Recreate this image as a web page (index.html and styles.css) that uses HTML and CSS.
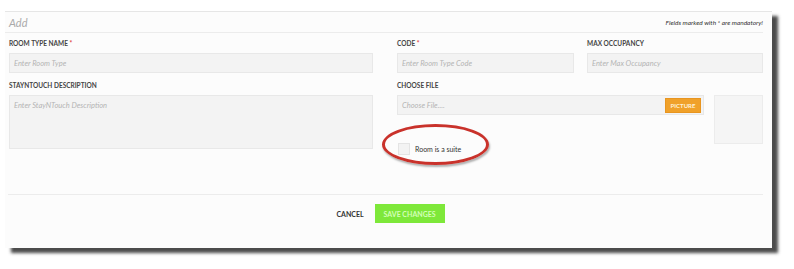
FILE: index.html
```html
<!DOCTYPE html>
<html lang="en">
<head>
    <meta charset="UTF-8">
    <meta name="viewport" content="width=device-width, initial-scale=1.0">
    <title>Add Room Type</title>
    <link rel="stylesheet" href="styles.css">
</head>
<body>
    <div class="panel">
        <div class="panel-head">
            <span class="title">Add</span>
            <span class="note">Fields marked with * are mandatory!</span>
        </div>
        <form class="room-form">
            <div class="row">
                <div class="field f-wide">
                    <label>ROOM TYPE NAME <span class="req">*</span></label>
                    <input type="text" placeholder="Enter Room Type">
                </div>
                <div class="field f-code">
                    <label>CODE <span class="req">*</span></label>
                    <input type="text" placeholder="Enter Room Type Code">
                </div>
                <div class="field f-max">
                    <label>MAX OCCUPANCY</label>
                    <input type="text" placeholder="Enter Max Occupancy">
                </div>
            </div>
            <div class="row">
                <div class="field f-wide">
                    <label>STAYNTOUCH DESCRIPTION</label>
                    <textarea placeholder="Enter StayNTouch Description"></textarea>
                </div>
                <div class="field f-file">
                    <label>CHOOSE FILE</label>
                    <div class="file-wrap">
                        <div class="file-col">
                            <div class="file-input">
                                <span class="ph">Choose File....</span>
                                <button type="button" class="btn-pic">PICTURE</button>
                            </div>
                            <div class="check-row">
                                <span class="box"></span>
                                <span>Room is a suite</span>
                                <span class="ring"></span>
                            </div>
                        </div>
                        <div class="preview"></div>
                    </div>
                </div>
            </div>
        </form>
        <div class="panel-foot">
            <button type="button" class="btn-cancel">CANCEL</button>
            <button type="button" class="btn-save">SAVE CHANGES</button>
        </div>
    </div>
</body>
</html>
```

FILE: styles.css
```css
body {
    margin: 0;
    padding: 11px 0 20px 5px;
    min-height: 100vh;
    box-sizing: border-box;
    background: #ffffff;
    font-family: Lato, "Open Sans", Arial, sans-serif;
    color: #333;
}
.panel {
    width: 767px;
    height: 236px;
    background: #fcfcfc;
    border-top: 1px solid #e6e6e6;
    box-shadow: 6px 5px 3px rgba(45, 45, 45, 0.85);
    display: flex;
    flex-direction: column;
}
.panel-head {
    height: 20px;
    margin: 0 9px 0 0;
    padding-left: 4px;
    border-bottom: 1px solid #ececec;
    display: flex;
    align-items: center;
    justify-content: space-between;
}
.title {
    font-size: 11px;
    font-style: italic;
    color: #aaa;
}
.note {
    font-size: 6.5px;
    font-style: italic;
    color: #333;
}
.room-form {
    padding: 7px 9px 0 4px;
    height: 154px;
}
.row {
    display: flex;
    margin-bottom: 9px;
}
.field label {
    display: block;
    font-size: 6.5px;
    font-weight: bold;
    color: #444;
    height: 8px;
    line-height: 8px;
    margin-bottom: 5px;
}
.req {
    color: #e03a3a;
}
.field input,
.field textarea,
.file-input {
    display: block;
    box-sizing: border-box;
    width: 100%;
    height: 20px;
    margin: 0;
    padding: 0 4px;
    background: #f3f3f3;
    border: 1px solid #e8e8e8;
    font-family: inherit;
    font-size: 7.5px;
    font-style: italic;
    outline: none;
}
.field input::placeholder,
.field textarea::placeholder,
.ph {
    color: #b4b4b4;
    font-style: italic;
}
.field textarea {
    height: 54px;
    padding-top: 5px;
    resize: none;
}
.f-wide {
    width: 364px;
    margin-right: 24px;
}
.f-code {
    width: 177px;
    margin-right: 13px;
}
.f-max {
    width: 176px;
}
.f-file {
    width: 366px;
}
.file-wrap {
    display: flex;
    gap: 10px;
}
.file-col {
    width: 307px;
}
.file-input {
    display: flex;
    align-items: center;
    justify-content: space-between;
    padding-right: 2px;
}
.btn-pic {
    height: 15px;
    width: 36px;
    padding: 0;
    border: 1px solid #e89520;
    background: #f0a12a;
    color: #fff2d8;
    font-family: inherit;
    font-size: 6px;
    font-weight: bold;
}
.preview {
    width: 49px;
    height: 49px;
    box-sizing: border-box;
    background: #f5f5f5;
    border: 1px solid #ececec;
}
.check-row {
    position: relative;
    display: flex;
    align-items: center;
    gap: 5px;
    margin-top: 28px;
    padding-left: 1px;
    font-size: 7px;
    color: #333;
}
.box {
    width: 10px;
    height: 10px;
    background: #f3f3f3;
    border: 1px solid #e4e4e4;
}
.ring {
    position: absolute;
    left: -15px;
    top: -19px;
    width: 101px;
    height: 35px;
    border: 3px solid #c9322b;
    border-radius: 50%;
    box-shadow: 1px 2px 2px rgba(0, 0, 0, 0.3);
}
.panel-foot {
    margin: 0 9px 0 3px;
    border-top: 1px solid #ececec;
    flex: 1;
    display: flex;
    justify-content: center;
    align-items: flex-start;
    gap: 11px;
    padding: 9px 0 0 10px;
}
.btn-cancel {
    height: 19px;
    padding: 0;
    border: none;
    background: none;
    font-family: inherit;
    font-size: 7px;
    font-weight: bold;
    color: #333;
}
.btn-save {
    width: 70px;
    height: 19px;
    padding: 0;
    border: none;
    background: #7ee83a;
    color: #d4ffb8;
    font-family: inherit;
    font-size: 7px;
    font-weight: bold;
}
```
